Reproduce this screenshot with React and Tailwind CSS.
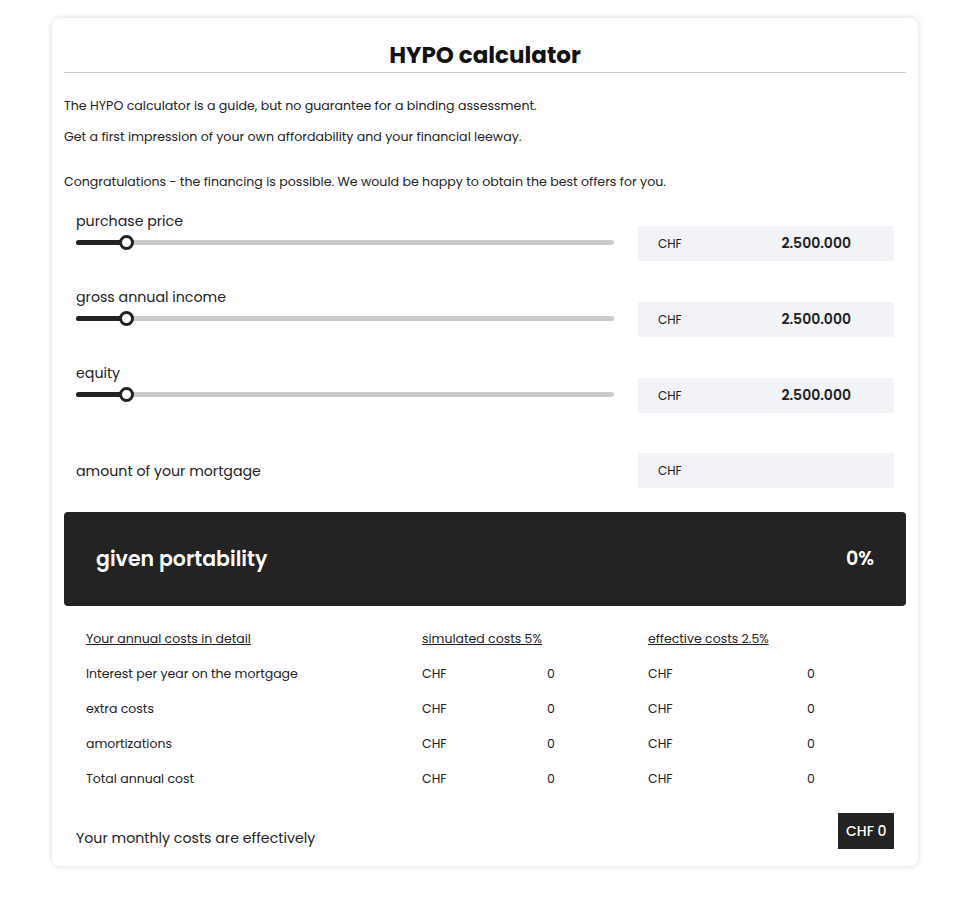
import React from "react";

const font = { fontFamily: "Poppins, 'Noto Sans', 'Open Sans', sans-serif" };

function SliderRow({ label }) {
  return (
    <div className="flex items-start h-[76px]">
      <div className="w-[574px] pl-[12px] pr-[24px]">
        <div className="text-[14.2px] text-[#222] leading-[20px] mb-[4px]">{label}</div>
        <div className="relative h-[14px] flex items-center">
          <div className="w-full h-[5px] rounded-full bg-[#cbcbcb]" />
          <div className="absolute left-0 top-[4.5px] w-[50px] h-[5px] rounded-full bg-[#222]" />
          <div className="absolute left-[43px] top-0 w-[15px] h-[15px] rounded-full bg-white border-[3px] border-[#222]" />
        </div>
      </div>
      <div className="mt-[15px] w-[256px] h-[35px] bg-[#f2f3f7] flex items-center pl-[20px] pr-[43px]">
        <span className="text-[12px] text-[#222]">CHF</span>
        <span className="ml-auto text-[14px] font-semibold text-[#222]">2.500.000</span>
      </div>
    </div>
  );
}

function CostRow({ label }) {
  return (
    <div className="flex items-center h-[35px] text-[12.5px] text-[#222]">
      <div className="w-[336px]">{label}</div>
      <div className="w-[226px] flex">
        <span className="w-[125px]">CHF</span>
        <span>0</span>
      </div>
      <div className="flex">
        <span className="w-[159px]">CHF</span>
        <span>0</span>
      </div>
    </div>
  );
}

export default function App() {
  return (
    <div className="min-h-[900px] bg-white pt-[18px]" style={font}>
      <div className="ml-[52px] w-[866px] h-[848px] bg-white rounded-[8px] shadow-[0_0_6px_rgba(0,0,0,0.15)] px-[12px]">
        <h1 className="text-[23px] font-bold text-[#111] text-center pt-[22px] leading-[30px] pb-[2px] border-b border-[#cfcfcf]">
          HYPO calculator
        </h1>
        <p className="text-[12.6px] text-[#222] mt-[23px] leading-[20px]">
          The HYPO calculator is a guide, but no guarantee for a binding assessment.
        </p>
        <p className="text-[12.6px] text-[#222] mt-[11px] leading-[20px]">
          Get a first impression of your own affordability and your financial leeway.
        </p>
        <p className="text-[12.6px] text-[#222] mt-[25px] leading-[20px]">
          Congratulations - the financing is possible. We would be happy to obtain the best offers for you.
        </p>
        <div className="mt-[19px]">
          <SliderRow label="purchase price" />
          <SliderRow label="gross annual income" />
          <SliderRow label="equity" />
          <div className="flex items-start h-[73px]">
            <div className="w-[574px] pl-[12px] text-[14.2px] leading-[20px] text-[#222] mt-[22px]">amount of your mortgage</div>
            <div className="mt-[14px] w-[256px] h-[35px] bg-[#f2f3f7] flex items-center pl-[20px]">
              <span className="text-[12px] text-[#222]">CHF</span>
            </div>
          </div>
        </div>
        <div className="h-[94px] bg-[#222322] rounded-[4px] flex items-center px-[32px] text-white">
          <span className="text-[20.5px] font-semibold">given portability</span>
          <span className="ml-auto text-[19px] font-semibold">0%</span>
        </div>
        <div className="pl-[22px] mt-[16px]">
          <div className="flex items-center h-[35px] text-[12.5px] text-[#222]">
            <div className="w-[336px] underline">Your annual costs in detail</div>
            <div className="w-[226px] underline">simulated costs 5%</div>
            <div className="underline">effective costs 2.5%</div>
          </div>
          <CostRow label="Interest per year on the mortgage" />
          <CostRow label="extra costs" />
          <CostRow label="amortizations" />
          <CostRow label="Total annual cost" />
        </div>
        <div className="flex items-end mt-[16px] pl-[12px] pr-[12px]">
          <span className="text-[14.2px] leading-[20px] text-[#222] mb-[1px]">Your monthly costs are effectively</span>
          <span className="ml-auto bg-[#222322] text-white text-[14px] font-medium h-[36px] px-[7.5px] flex items-center">CHF 0</span>
        </div>
      </div>
    </div>
  );
}
